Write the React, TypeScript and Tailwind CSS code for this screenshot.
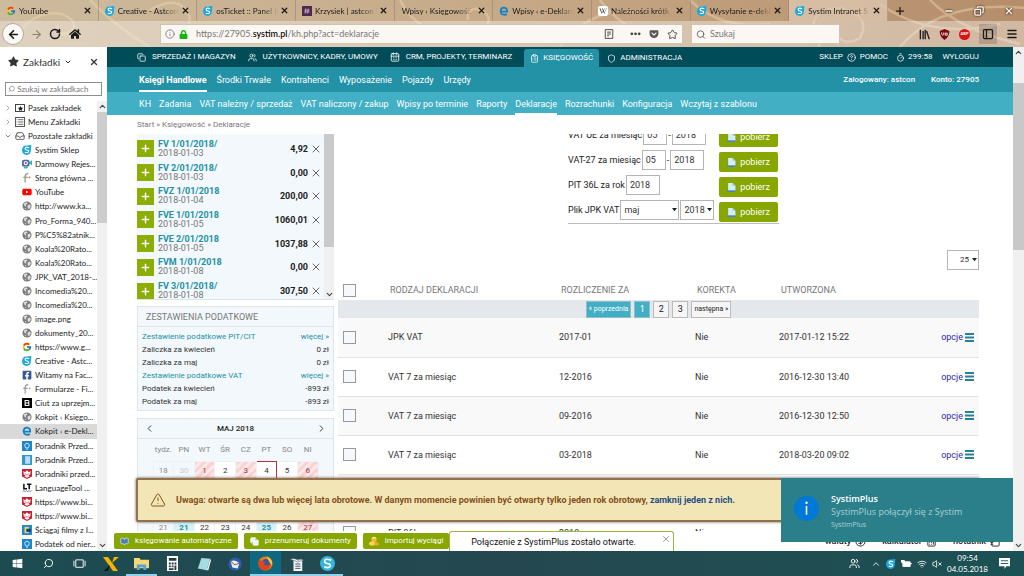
import { ReactNode } from 'react';
import {
	ArrowLeft, ArrowRight, BookOpen, Calculator, CalendarDays, ChevronDown, ChevronLeft, ChevronRight, ChevronUp,
	CircleHelp, ClipboardList, Copy, Info, Inbox, List, Menu, Minus, NotebookPen, PanelLeft, Plus, RotateCw, Search,
	Shield, Star, Timer, TriangleAlert, Users, VolumeX, Wifi, X, CircleDollarSign,
} from 'lucide-react';
import { FaFacebookSquare, FaGetPocket, FaHome, FaLock, FaStar, FaWikipediaW, FaWindows, FaYoutube } from 'react-icons/fa';
import { FcGoogle } from 'react-icons/fc';
import { clsx } from 'clsx';

type IconName =
	| 'google' | 'systim' | 'slack' | 'edge' | 'wiki' | 'globe' | 'youtube' | 'facebook' | 'fi' | 'fiColor' | 'camera'
	| 'black' | 'bulb' | 'book' | 'eagle' | 'lt' | 'film' | 'none';

const TABS: { title: string; icon: IconName }[] = [
	{ title: 'YouTube', icon: 'google' },
	{ title: 'Creative - Astcon', icon: 'systim' },
	{ title: 'osTicket :: Panel K', icon: 'systim' },
	{ title: 'Krzysiek | astcon S', icon: 'slack' },
	{ title: 'Wpisy ‹ Księgowość s', icon: 'none' },
	{ title: 'Wpisy ‹ e-Deklara', icon: 'edge' },
	{ title: 'Należności krótk', icon: 'wiki' },
	{ title: 'Wysyłanie e-dekl', icon: 'systim' },
	{ title: 'Systim Intranet Sy', icon: 'systim' },
];

const BOOKMARKS: { title: string; icon: IconName; active?: boolean }[] = [
	{ title: 'Systim Sklep', icon: 'systim' },
	{ title: 'Darmowy Rejes...', icon: 'camera' },
	{ title: 'Strona główna ...', icon: 'fiColor' },
	{ title: 'YouTube', icon: 'youtube' },
	{ title: 'http://www.ka...', icon: 'globe' },
	{ title: 'Pro_Forma_940...', icon: 'globe' },
	{ title: 'P%C5%82atnik...', icon: 'globe' },
	{ title: 'Koala%20Rato...', icon: 'globe' },
	{ title: 'Koala%20Rato...', icon: 'globe' },
	{ title: 'JPK_VAT_2018-...', icon: 'globe' },
	{ title: 'Incomedia%20...', icon: 'globe' },
	{ title: 'Incomedia%20...', icon: 'globe' },
	{ title: 'image.png', icon: 'globe' },
	{ title: 'dokumenty_20...', icon: 'globe' },
	{ title: 'https://www.g...', icon: 'google' },
	{ title: 'Creative - Astc...', icon: 'systim' },
	{ title: 'Witamy na Fac...', icon: 'facebook' },
	{ title: 'Formularze - Fi...', icon: 'fi' },
	{ title: 'Ciut za uprzejm...', icon: 'black' },
	{ title: 'Kokpit ‹ Księgo...', icon: 'globe' },
	{ title: 'Kokpit ‹ e-Dekl...', icon: 'edge', active: true },
	{ title: 'Poradnik Przed...', icon: 'bulb' },
	{ title: 'Poradnik Przed...', icon: 'book' },
	{ title: 'Poradniki przed...', icon: 'eagle' },
	{ title: 'LanguageTool ...', icon: 'lt' },
	{ title: 'https://www.bi...', icon: 'eagle' },
	{ title: 'https://www.bi...', icon: 'eagle' },
	{ title: 'Ściągaj filmy z I...', icon: 'film' },
	{ title: 'Podatek od nier...', icon: 'bulb' },
];

const INVOICES = [
	{ no: 'FV 1/01/2018/', date: '2018-01-03', amount: '4,92' },
	{ no: 'FV 2/01/2018/', date: '2018-01-03', amount: '0,00' },
	{ no: 'FVZ 1/01/2018', date: '2018-01-04', amount: '200,00' },
	{ no: 'FVE 1/01/2018', date: '2018-01-05', amount: '1060,01' },
	{ no: 'FVE 2/01/2018', date: '2018-01-05', amount: '1037,88' },
	{ no: 'FVM 1/01/2018', date: '2018-01-08', amount: '0,00' },
	{ no: 'FV 3/01/2018/', date: '2018-01-08', amount: '307,50' },
];

const TAXES = [
	{ label: 'Zestawienie podatkowe PIT/CIT', value: 'więcej »', link: true },
	{ label: 'Zaliczka za kwiecień', value: '0 zł' },
	{ label: 'Zaliczka za maj', value: '0 zł' },
	{ label: 'Zestawienie podatkowe VAT', value: 'więcej »', link: true },
	{ label: 'Podatek za kwiecień', value: '-893 zł' },
	{ label: 'Podatek za maj', value: '-893 zł' },
];

const WEEK_DAYS = ['tydz.', 'PN', 'WT', 'ŚR', 'CZ', 'PT', 'SO', 'NI'];
const WEEKS = [
	[18, 30, 1, 2, 3, 4, 5, 6],
	[19, 7, 8, 9, 10, 11, 12, 13],
	[20, 14, 15, 16, 17, 18, 19, 20],
	[21, 21, 22, 23, 24, 25, 26, 27],
];

const ROWS = [
	{ kind: 'JPK VAT', period: '2017-01', fixed: 'Nie', created: '2017-01-12 15:22' },
	{ kind: 'VAT 7 za miesiąc', period: '12-2016', fixed: 'Nie', created: '2016-12-30 13:40' },
	{ kind: 'VAT 7 za miesiąc', period: '09-2016', fixed: 'Nie', created: '2016-12-30 12:50' },
	{ kind: 'VAT 7 za miesiąc', period: '03-2018', fixed: 'Nie', created: '2018-03-20 09:02' },
	{ kind: '', period: '', fixed: '', created: '' },
	{ kind: 'PIT 36L', period: '2018', fixed: 'Nie', created: '' },
];

const SUB_NAV = [
	'KH', 'Zadania', 'VAT należny / sprzedaż', 'VAT naliczony / zakup', 'Wpisy po terminie', 'Raporty', 'Deklaracje',
	'Rozrachunki', 'Konfiguracja', 'Wczytaj z szablonu',
];

function SiteIcon({ name }: { name: IconName }) {
	switch (name) {
		case 'google': return <FcGoogle className="size-[10px] shrink-0" />;
		case 'youtube': return <FaYoutube className="size-[10px] shrink-0 text-[#f00]" />;
		case 'facebook': return <FaFacebookSquare className="size-[10px] shrink-0 text-[#3b5998]" />;
		case 'wiki': return <span className="flex size-[10px] shrink-0 items-center justify-center rounded-[2px] bg-white"><FaWikipediaW className="size-2" /></span>;
		case 'none': return null;
	}
	return (
		<svg viewBox="0 0 16 16" className="size-[10px] shrink-0" aria-hidden="true">
			{name === 'systim' && (
				<>
					<path d="M4 1 15 0 14 10Q13 16 7 16 1 15 0 9Q0 3 4 1Z" fill="#1ba8e0" />
					<path d="M11.5 4.5Q5 2 5 5.500 5 7.500 8 8 11 8.500 10.500 10.800 9.500 13 4.500 11.500" fill="none" stroke="#fff" strokeWidth="1.8" />
				</>
			)}
			{name === 'slack' && (
				<>
					<rect width="16" height="16" rx="1" fill="#4a2a4d" />
					<path d="M6 4 5 12M10 4 9 12M4 6.500H12M4 9.500H12" stroke="#cfb7c9" strokeWidth="1.300" />
				</>
			)}
			{name === 'edge' && (
				<path d="M3 9H13Q13.500 3 8 2.500 3 2.500 2.500 8 3 14 8.500 14 11 14 12.500 13" fill="none" stroke="#1583c6" strokeWidth="3" />
			)}
			{name === 'globe' && (
				<>
					<circle cx="8" cy="8" r="7.300" fill="#7b7b7b" />
					<path d="M3 4 7 2 9 4 6 6 7 9 4 8ZM9 7 13 5 14 9 11 13 9 11ZM4 11 7 12 6 14Z" fill="#dedede" />
				</>
			)}
			{(name === 'fi' || name === 'fiColor') && (
				<>
					<path d="M10 1Q5 1 5 6V15M2 7H9" fill="none" stroke={name === 'fi' ? '#999' : '#8b9b7b'} strokeWidth="2" />
					<circle cx="12" cy="7" r="1.500" fill={name === 'fi' ? '#aaa' : '#e06a4a'} />
				</>
			)}
			{name === 'camera' && (
				<>
					<rect x="0" y="1" width="12" height="11" rx="3" fill="#4b6aa8" />
					<path d="m11 5 5-3V10l-5-3Z" fill="#35b7a5" />
					<path d="M2 12H10L8 15H4Z" fill="#35b7a5" />
					<circle cx="6" cy="6.500" r="3.500" fill="#fff" />
					<circle cx="6" cy="6.500" r="1.800" fill="#c2416a" />
				</>
			)}
			{name === 'black' && (
				<>
					<rect width="16" height="16" fill="#000" />
					<path d="M5 4H9Q11.500 4 11 6.500L10 8Q12 9 11 11.500L9 12H5ZM5 8H10" fill="none" stroke="#fff" strokeWidth="1.800" />
				</>
			)}
			{name === 'bulb' && (
				<>
					<rect width="16" height="16" fill="#1c86c8" />
					<path d="M6 11Q3 7 5 5 8 2 11 5 13 7 10 11ZM6.500 13H9.500" fill="none" stroke="#d8f1ff" strokeWidth="1.400" />
				</>
			)}
			{name === 'book' && (
				<>
					<rect width="16" height="16" fill="#2f97d4" />
					<rect x="5" y="2" width="8" height="12" fill="#b9e0f5" />
				</>
			)}
			{name === 'eagle' && (
				<>
					<path d="M0 0H16V12L8 16 0 12Z" fill="#c8202f" />
					<path d="M2 3 5 5 8 2 11 5 14 3 13 9 10 9 12 12 8 14 4 12 6 9 3 9Z" fill="#fff" />
					<path d="M5 7 8 10 11 7" fill="none" stroke="#c8202f" strokeWidth="1" />
				</>
			)}
			{name === 'lt' && (
				<>
					<path d="M3 1V9H8M8 2H15M11.500 2V10" fill="none" stroke="#111" strokeWidth="2.400" />
					<path d="m1 14 2-2 2 2 2-2 2 2 2-2 2 2 2-2" fill="none" stroke="#4660a8" strokeWidth="1.300" />
				</>
			)}
			{name === 'film' && (
				<>
					<rect width="16" height="16" fill="#1e8ad6" />
					<path d="M4 3h7v10H4z" fill="#f1d35a" />
					<path d="M7 6h7v5H7z" fill="#123f70" />
				</>
			)}
		</svg>
	);
}

function Swirls() {
	return (
		<svg className="pointer-events-none absolute inset-0 size-full" viewBox="0 0 1024 47" preserveAspectRatio="xMidYMid slice" aria-hidden="true">
			<g fill="none" stroke="#f0d6b0" strokeWidth="2.500" opacity="0.45">
				<path d="M10 47Q30 8 62 14 84 24 66 34 54 34 58 26M90 0Q120 30 150 47M150 10Q180 -8 190 18 186 38 168 32" />
				<path d="M400 0Q420 40 470 34 500 24 482 10 466 6 468 20M560 47Q590 6 640 12M600 0Q630 40 680 40" />
				<path d="M690 0Q720 30 770 24M820 47Q800 10 840 8 872 16 860 38 842 48 836 32M880 4Q930 40 1000 24M900 47Q940 0 1024 8M930 0Q960 30 1020 44" />
			</g>
		</svg>
	);
}

function BrowserChrome() {
	return (
		<header className="relative shrink-0 bg-gradient-to-r from-[#cdbb9e] via-[#c6a987] to-[#b58d6b] text-[#1c1a18]">
			<Swirls />
			<div className="relative flex h-[21px] items-stretch">
				<div className="grid min-w-0 flex-1 grid-cols-9" role="tablist">
					{TABS.map((tab, i) => (
						<div
							key={tab.title}
							role="tab"
							className={clsx(
								'flex min-w-0 items-center gap-0.5 border-r border-[#8f7d68]/50 px-1.5',
								i === TABS.length - 1 && 'bg-[#e3cdb6]/70',
							)}
						>
							<SiteIcon name={tab.icon} />
							<span className="flex-1 overflow-hidden pl-px whitespace-nowrap [mask-image:linear-gradient(to_right,black_75%,transparent)]">{tab.title}</span>
							<button type="button" aria-label="Zamknij kartę"><X className="size-[9px]" strokeWidth={3.5} /></button>
						</div>
					))}
				</div>
				<div className="flex w-[136px] shrink-0 items-center justify-between pr-2.5 pl-1.5">
					<button type="button" aria-label="Nowa karta"><Plus className="size-3" strokeWidth={2.5} /></button>
					<div className="flex gap-5 text-[#fff8ee] drop-shadow-[0_0_1px_#000]">
						<button type="button" aria-label="Minimalizuj"><Minus className="size-2.5" strokeWidth={4} /></button>
						<button type="button" aria-label="Przywróć"><Copy className="size-2.5 -scale-x-100" strokeWidth={3} /></button>
						<button type="button" aria-label="Zamknij"><X className="size-2.5" strokeWidth={3} /></button>
					</div>
				</div>
			</div>
			<div className="relative flex h-[26px] items-center bg-[#f3eee6]/45 pr-1.5 pl-0.5">
				<div className="flex w-[158px] shrink-0 items-center gap-1.5">
					<button type="button" aria-label="Wstecz" className="flex size-[22px] items-center justify-center rounded-full border border-[#b6aa98] bg-[#fbf9f6]"><ArrowLeft className="size-[13px]" strokeWidth={3} /></button>
					<button type="button" aria-label="Dalej" className="text-[#8a8378]"><ArrowRight className="size-[13px]" /></button>
					<button type="button" aria-label="Odśwież"><RotateCw className="size-[12px]" strokeWidth={3} /></button>
					<button type="button" aria-label="Strona startowa" className="pl-0.5"><FaHome className="size-[12px]" /></button>
				</div>
				<div className="flex h-5 min-w-0 flex-1 items-center gap-1 border border-[#cfc3b3] bg-[#fbf8f4] px-1 text-[#777]">
					<Info className="size-2.5" />
					<FaLock className="size-[9px] text-[#12b512]" />
					<div className="flex-1 pl-1 text-[9px]">https://27905.<b className="font-medium text-black">systim.pl</b>/kh.php?act=deklaracje</div>
					<svg viewBox="0 0 16 16" className="mr-3 size-[10px]" aria-label="Widok do czytania"><path d="M2 1H14V15H2ZM5 5H11M5 8H11M5 11H8" fill="none" stroke="#444" strokeWidth="1.500" /></svg>
					<svg viewBox="0 0 12 4" className="mr-1 w-[11px]" aria-label="Więcej"><circle cx="2" cy="2" r="1.500" fill="#444" /><circle cx="6" cy="2" r="1.500" fill="#444" /><circle cx="10" cy="2" r="1.500" fill="#444" /></svg>
					<FaGetPocket className="mr-1 size-[10px] text-[#555]" />
					<Star className="size-[11px] text-[#444]" />
				</div>
				<label className="ml-2 flex h-5 w-[149px] shrink-0 items-center gap-1 border border-[#cfc3b3] bg-[#fbf8f4] px-1">
					<Search className="size-[11px] text-[#555]" />
					<input aria-label="Szukaj" placeholder="Szukaj" className="w-full min-w-0 bg-transparent text-[9px] outline-none placeholder:text-[#777]" />
				</label>
				<div className="flex w-[178px] shrink-0 items-center justify-end gap-[9px]">
					<svg viewBox="0 0 16 16" className="size-[11px]" aria-label="Biblioteka"><path d="M2 1V15M6 3V15M9 1V15M11 3 15 15" stroke="#222" strokeWidth="2" /></svg>
					<svg viewBox="0 0 16 16" className="size-[11px]" aria-label="uBlock"><path d="M8 0 15 3Q15 12 8 16 1 12 1 3Z" fill="#7c0912" /><path d="M4 5V8Q5 10 7 8V5M9 6h3v3H9Z" fill="none" stroke="#fff" strokeWidth="1.200" /></svg>
					<span className="flex size-[11px] items-center justify-center rounded-full bg-[#d81414] text-[4px] font-bold text-white">ABP</span>
					<button type="button" aria-label="Panel boczny" className="flex h-5 w-[18px] items-center justify-center bg-black/15"><PanelLeft className="size-3" strokeWidth={2.5} /></button>
					<button type="button" aria-label="Menu"><Menu className="size-3" strokeWidth={3} /></button>
				</div>
			</div>
		</header>
	);
}

function Scrollbar({ children }: { children?: ReactNode }) {
	return (
		<div className="flex shrink-0 flex-col items-center bg-[#f0f0f0] text-[#444]" aria-hidden="true">
			<ChevronUp className="my-px size-[9px]" strokeWidth={3} />
			{children}
			<div className="flex-1" />
			<ChevronDown className="my-px size-[9px]" strokeWidth={3} />
		</div>
	);
}

function Bookmarks() {
	return (
		<aside className="flex w-[107px] shrink-0 flex-col bg-white text-[#1d1d1d]">
			<div className="flex h-[29px] items-center gap-1 pr-2 pl-2 text-[#333]">
				<FaStar className="size-[11px]" />
				<span className="text-[10px]">Zakładki</span>
				<ChevronDown className="size-2" strokeWidth={3} />
				<button type="button" aria-label="Zamknij panel" className="ml-auto"><X className="size-[10px]" strokeWidth={3} /></button>
			</div>
			<label className="mx-[5px] mt-1.5 mb-[5px] flex h-[14px] items-center gap-0.5 border border-[#8d8d8d] px-0.5">
				<Search className="size-2 -scale-x-100 text-[#777]" />
				<input aria-label="Szukaj w zakładkach" placeholder="Szukaj w zakładkach" className="w-full min-w-0 text-[8px] outline-none placeholder:text-[#777]" />
			</label>
			<div className="flex min-h-0 flex-1">
				<ul className="grid min-w-0 flex-1 auto-rows-fr">
					<li className="flex items-center gap-[3px] pl-1 whitespace-nowrap"><ChevronRight className="size-2 text-[#888]" /><span className="flex h-[8px] w-[10px] items-center justify-center border border-[#444]"><FaStar className="size-[5px]" /></span>Pasek zakładek</li>
					<li className="flex items-center gap-[3px] pl-1 whitespace-nowrap"><ChevronRight className="size-2 text-[#888]" /><span className="flex size-[10px] items-center justify-center border border-[#555]"><List className="size-2" /></span>Menu Zakładki</li>
					<li className="flex items-center gap-[3px] pl-1 whitespace-nowrap"><ChevronDown className="size-2 text-[#444]" /><Inbox className="size-[10px] text-[#444]" />Pozostałe zakładki</li>
					{BOOKMARKS.map((b, i) => (
						<li key={i} className={clsx('flex', b.active && 'bg-[#d9d9d9]')}>
							<a href="#" className="flex items-center gap-[3px] pl-[22px] whitespace-nowrap"><SiteIcon name={b.icon} />{b.title}</a>
						</li>
					))}
				</ul>
				<Scrollbar><div className="h-[111px] w-[10px] bg-[#cdcdcd]" /></Scrollbar>
			</div>
		</aside>
	);
}

function TopNav() {
	return (
		<nav className="shrink-0 text-white">
			<div className="flex h-5 items-center justify-between bg-[#004c59] pr-[34px] pl-[30px]">
				<div className="flex h-full items-center gap-3">
					<a href="#" className="flex items-center gap-1.5"><Copy className="size-[9px]" />SPRZEDAŻ I MAGAZYN</a>
					<a href="#" className="flex items-center gap-1.5"><Users className="size-[9px]" />UŻYTKOWNICY, KADRY, UMOWY</a>
					<a href="#" className="flex items-center gap-1.5"><CalendarDays className="size-[10px]" />CRM, PROJEKTY, TERMINARZ</a>
					<div className="flex h-full items-end gap-2">
						<a href="#" className="flex h-[18px] items-center gap-1 rounded-t-[3px] bg-[#2391a6] px-1.5"><ClipboardList className="size-[9px]" />KSIĘGOWOŚĆ</a>
						<a href="#" className="flex h-[18px] items-center gap-1"><Shield className="size-[9px]" />ADMINISTRACJA</a>
					</div>
				</div>
				<div className="flex items-center">
					<a href="#">SKLEP</a>
					<a href="#" className="ml-1 flex items-center gap-1"><CircleHelp className="size-[9px]" />POMOC</a>
					<span className="ml-2 flex items-center gap-[3px]"><Timer className="size-[9px]" />299:58</span>
					<a href="#" className="ml-2.5">WYLOGUJ</a>
				</div>
			</div>
			<div className="flex h-[25px] items-stretch justify-between bg-[#2391a6] pr-[34px] pl-8">
				<div className="flex gap-2.5 text-[9px]">
					<a href="#" className="flex items-center border-y-2 border-t-transparent border-b-white font-bold">Księgi Handlowe</a>
					{['Środki Trwałe', 'Kontrahenci', 'Wyposażenie', 'Pojazdy', 'Urzędy'].map(label => (
						<a key={label} href="#" className="flex items-center">{label}</a>
					))}
				</div>
				<div className="flex items-center gap-4 font-medium">
					<span>Zalogowany: astcon</span>
					<span>Konto: 27905</span>
				</div>
			</div>
			<div className="flex h-[23px] items-stretch gap-2 bg-[#42afc5] pl-8 text-[9px]">
				{SUB_NAV.map(label => (
					<a key={label} href="#" className={clsx('flex items-center border-y-2 border-transparent', label === 'Deklaracje' && 'border-b-white')}>{label}</a>
				))}
			</div>
		</nav>
	);
}

function LeftColumn() {
	return (
		<div className="flex w-[197px] shrink-0 flex-col text-[8px]">
			<div className="flex h-[166px] shrink-0 overflow-hidden border-b border-[#dde3e6] bg-[#f2f8fb]">
				<ul className="mt-[3px] grid h-[166px] flex-1 auto-rows-fr">
					{INVOICES.map(inv => (
						<li key={inv.no} className="flex items-center">
							<button type="button" aria-label="Dodaj" className="flex size-[17px] items-center justify-center bg-[#8cad05] text-white"><Plus className="size-[11px]" strokeWidth={3} /></button>
							<div className="ml-1 flex-1 text-[9px] leading-[9px] text-[#777]">
								<a href="#" className="block font-bold text-[#2391a6]">{inv.no}</a>
								{inv.date}
							</div>
							<b className="text-[9px] text-[#222]">{inv.amount}</b>
							<button type="button" aria-label="Usuń" className="mx-0.5"><X className="size-3 text-[#555]" strokeWidth={1.8} /></button>
						</li>
					))}
				</ul>
				<div className="flex w-[10px] flex-col items-center justify-between bg-[#f0f0f0]" aria-hidden="true">
					<div className="h-[113px] w-full bg-[#cacaca]" />
					<ChevronDown className="size-[9px] text-[#444]" strokeWidth={3} />
				</div>
			</div>

			<section className="mt-1.5 shrink-0 border border-[#dfe6ea] bg-[#f2f8fb] pb-0.5">
				<h2 className="flex h-5 items-center border-b border-[#dfe6ea] pl-2 text-[9px] text-[#777]">ZESTAWIENIA PODATKOWE</h2>
				<div className="pt-[3px] pr-1 pl-1">
					{TAXES.map(tax => (
						<div key={tax.label} className={clsx('flex h-[13px] items-center justify-between', tax.link ? 'text-[#2391a6]' : 'text-[#333]')}>
							{tax.link ? <a href="#">{tax.label}</a> : <span>{tax.label}</span>}
							{tax.link ? <a href="#">{tax.value}</a> : <span>{tax.value}</span>}
						</div>
					))}
				</div>
			</section>

			<section className="mt-[7px] shrink-0 border border-[#dfe6ea] bg-[#f2f8fb]">
				<div className="flex h-5 items-center justify-between border-b border-[#dfe6ea] px-1.5">
					<button type="button" aria-label="Poprzedni miesiąc"><ChevronLeft className="size-[11px] text-[#333]" /></button>
					<h2 className="font-medium text-[#222]">MAJ 2018</h2>
					<button type="button" aria-label="Następny miesiąc"><ChevronRight className="size-[11px] text-[#333]" /></button>
				</div>
				<table className="mx-auto w-[166px] table-fixed text-center text-[#333]">
					<thead>
						<tr className="h-[22px] text-[#888]">
							{WEEK_DAYS.map(d => <th key={d} className="font-normal">{d}</th>)}
						</tr>
					</thead>
					<tbody>
						{WEEKS.map(week => (
							<tr key={week[0]} className="h-[19px]">
								{week.map((day, i) => {
									const holiday = i === 7 || (week[0] === 18 && (i === 2 || i === 4));
									const marked = week[0] === 21 && (i === 1 || i === 5);
									const today = week[0] === 18 && day === 4;
									return (
										<td
											key={i}
											className={clsx(
												'border',
												today ? 'border-[#b5333c]' : 'border-[#eef3f6]',
												day === 30 && 'text-[#ccc]',
												i === 0 && 'text-[#888]',
												i > 0 && day !== 30 && !holiday && !marked && 'bg-white',
												holiday && 'bg-[repeating-linear-gradient(135deg,#fbd0d0_0_3px,#fdeaea_3px_6px)] text-[#99404a]',
												marked && 'bg-[#d5f2f7] font-bold text-[#2391a6]',
											)}
										>
											{day}
										</td>
									);
								})}
							</tr>
						))}
					</tbody>
				</table>
			</section>
		</div>
	);
}

function Dropdown({ label, value, className }: { label: string; value: string; className: string }) {
	return (
		<span className={clsx('relative flex', className)}>
			<select aria-label={label} className="h-5 w-full appearance-none border border-[#b5b5b5] bg-white pl-[3px] text-[9px] text-[#333]">
				<option>{value}</option>
			</select>
			<svg viewBox="0 0 6 4" className="pointer-events-none absolute top-2 right-0.5 w-[5px]" aria-hidden="true"><path d="M0 0H6L3 4Z" fill="#222" /></svg>
		</span>
	);
}

function Field({ label, value, className }: { label: string; value: string; className: string }) {
	return <input aria-label={label} defaultValue={value} className={clsx('h-5 border border-[#b5b5b5] bg-white pl-[3px] text-[9px] text-[#333]', className)} />;
}

function FormRow({ label, children }: { label: string; children: ReactNode }) {
	return (
		<div className="flex h-[25px] shrink-0 justify-between">
			<div className="flex items-center gap-px text-[9px] text-[#222]"><span>{label}</span>{children}</div>
			<button type="button" className="mr-px flex h-5 w-[59px] items-center justify-center gap-1 self-end rounded-[2px] bg-[#87a600] text-[9px] text-white">
				<svg viewBox="0 0 16 16" className="size-[9px]" aria-hidden="true"><path d="M2 0H10L15 5V14H2Z" fill="#d5edfa" /><path d="M10 0V5H15Z" fill="#8ec4e8" /><path d="M0 13H15V16H0Z" fill="#4b86bb" /></svg>
				pobierz
			</button>
		</div>
	);
}

const CHECKBOX = 'block size-[13px] appearance-none border border-[#999] bg-[#f6f9fb]';

function MainColumn() {
	return (
		<div className="ml-1 flex min-w-0 flex-1 flex-col">
			<div className="ml-[230px] flex h-[90px] w-[211px] shrink-0 flex-col justify-end overflow-hidden border-b border-[#bbb] pb-px">
				<FormRow label="VAT UE za miesiąc">
					<Field label="Miesiąc VAT UE" value="05" className="w-6" />-<Field label="Rok VAT UE" value="2018" className="w-[34px]" />
				</FormRow>
				<FormRow label="VAT-27 za miesiąc">
					<Field label="Miesiąc VAT-27" value="05" className="w-6" />-<Field label="Rok VAT-27" value="2018" className="w-[34px]" />
				</FormRow>
				<FormRow label="PIT 36L za rok">
					<Field label="Rok PIT 36L" value="2018" className="w-[34px]" />
				</FormRow>
				<FormRow label="Plik JPK VAT">
					<Dropdown label="Miesiąc JPK" value="maj" className="w-[59px]" />
					<Dropdown label="Rok JPK" value="2018" className="w-[34px]" />
				</FormRow>
			</div>

			<div className="mt-[26px] flex shrink-0 justify-end">
				<span className="relative flex w-8">
					<select aria-label="Wierszy na stronie" className="h-5 w-full appearance-none border border-[#b5b5b5] bg-white pl-3 text-[8px] text-[#333]">
						<option>25</option>
					</select>
					<svg viewBox="0 0 6 4" className="pointer-events-none absolute top-2 right-0.5 w-[5px]" aria-hidden="true"><path d="M0 0H6L3 4Z" fill="#222" /></svg>
				</span>
			</div>

			<table className="mt-2.5 w-full table-fixed text-left text-[9px] text-[#333]">
				<colgroup>
					<col className="w-[50px]" />
					<col className="w-[171px]" />
					<col className="w-[136px]" />
					<col className="w-[84px]" />
					<col />
					<col className="w-[60px]" />
				</colgroup>
				<thead>
					<tr className="h-5 text-[#777]">
						<th className="pl-[5px]"><input type="checkbox" aria-label="Zaznacz wszystkie" className={CHECKBOX} /></th>
						<th className="pl-0.5 font-normal">RODZAJ DEKLARACJI</th>
						<th className="pl-0.5 font-normal">ROZLICZENIE ZA</th>
						<th className="pl-0.5 font-normal">KOREKTA</th>
						<th className="pl-0.5 font-normal">UTWORZONA</th>
						<th />
					</tr>
				</thead>
				<tbody>
					<tr className="h-[18px] bg-[#e4e7ec]">
						<td colSpan={6}>
							<div className="flex justify-center gap-[3px] text-[7px] text-[#222]">
								<button type="button" className="h-[17px] border border-[#8fbfca] bg-[#42afc5] px-0.5 text-white">« poprzednia</button>
								<button type="button" className="h-[17px] w-4 border border-[#8fbfca] bg-[#42afc5] text-[9px] text-white">1</button>
								<button type="button" className="h-[17px] w-4 border border-[#bbb] bg-[#f6f6f6] text-[9px]">2</button>
								<button type="button" className="h-[17px] w-4 border border-[#bbb] bg-[#f6f6f6] text-[9px]">3</button>
								<button type="button" className="h-[17px] border border-[#bbb] bg-[#f6f6f6] px-0.5">następna »</button>
							</div>
						</td>
					</tr>
					{ROWS.map((row, i) => (
						<tr key={i} className="h-[39px] border-b border-[#e3e3e3] odd:bg-white even:bg-[#f9f9f9]">
							<td className="pl-[5px]"><input type="checkbox" aria-label={row.kind} className={CHECKBOX} /></td>
							<td>{row.kind}</td>
							<td>{row.period}</td>
							<td>{row.fixed}</td>
							<td>{row.created}</td>
							<td className="pr-[5px]">
								{row.created && (
									<a href="#" className="flex items-center justify-end gap-0.5 text-[#2b1fb0]">
										opcje
										<svg viewBox="0 0 9 9" className="size-[9px]" aria-hidden="true"><path d="M0 1H9M0 4.500H9M0 8H9" stroke="#2a8197" strokeWidth="2" /></svg>
									</a>
								)}
							</td>
						</tr>
					))}
				</tbody>
			</table>
		</div>
	);
}

function GreenButton({ label, children }: { label: string; children: ReactNode }) {
	return (
		<button type="button" className="flex h-4 shrink-0 items-center gap-1.5 rounded-[2px] bg-[#87a600] px-1.5 text-white">
			{children}
			{label}
		</button>
	);
}

function BottomBar() {
	return (
		<div className="relative flex h-5 shrink-0 items-center justify-between bg-white pr-3 pl-[7px]">
			<div className="flex gap-1.5">
				<GreenButton label="księgowanie automatyczne"><BookOpen className="size-[9px] fill-[#4f7fae] text-[#cfe2f2]" /></GreenButton>
				<GreenButton label="przenumeruj dokumenty"><Copy className="size-[9px] fill-[#e8f3fb]" /></GreenButton>
				<GreenButton label="importuj wyciągi">
					<svg viewBox="0 0 12 12" className="size-[10px]" aria-hidden="true"><ellipse cx="6" cy="3" rx="3" ry="2" fill="#ffe98a" /><path d="M3 3V7H9V3" fill="#f0b93a" /><ellipse cx="4" cy="9" rx="4" ry="2.500" fill="#ffd65a" /><ellipse cx="9" cy="9.500" rx="3" ry="2" fill="#f5a623" /></svg>
				</GreenButton>
			</div>
			<div className="absolute top-0 left-[342px] flex h-5 w-[225px] items-center justify-center rounded-t-[3px] border border-b-0 border-[#9ab53a] bg-white pr-4 text-[9px] text-[#111]">
				Połączenie z SystimPlus zostało otwarte.
				<button type="button" aria-label="Zamknij" className="absolute top-0.5 right-0.5"><X className="size-[10px] text-[#666]" strokeWidth={1.5} /></button>
			</div>
			<div className="flex gap-4 text-[9px] font-medium text-[#222]">
				<span className="flex items-center gap-1">waluty <CircleDollarSign className="size-[11px]" /></span>
				<span className="flex items-center gap-1">kalkulator <Calculator className="size-[11px]" /></span>
				<span className="flex items-center gap-1">notatnik <NotebookPen className="size-[11px]" /></span>
			</div>
		</div>
	);
}

function Page() {
	return (
		<main className="relative flex min-w-0 flex-1 flex-col bg-white font-[Roboto,sans-serif]">
			<TopNav />
			<div className="flex h-[19px] shrink-0 items-center pl-[30px] text-[#777]">Start » Księgowość » Deklaracje</div>
			<div className="flex min-h-0 flex-1 overflow-hidden pr-[34px] pl-[30px]">
				<LeftColumn />
				<MainColumn />
			</div>
			<BottomBar />

			<div role="alert" className="absolute right-[33px] bottom-[29px] left-[29px] flex h-11 items-center gap-2.5 rounded-[2px] border-2 border-[#967049] bg-[#f2e6b6] pl-3 text-[9px] font-bold text-[#86501a] shadow-[0_0_3px_#555]">
				<TriangleAlert className="size-4" strokeWidth={1.5} />
				<span className="whitespace-nowrap">Uwaga: otwarte są dwa lub więcej lata obrotowe. W danym momencie powinien być otwarty tylko jeden rok obrotowy, <a href="#" className="text-[#1f4f86]">zamknij jeden z nich.</a></span>
			</div>

			<div role="status" className="absolute right-0 bottom-[9px] flex h-16 w-[232px] gap-3 bg-[#2b7f8b] pt-[14px] pl-[13px] font-['Open_Sans',sans-serif] text-white">
				<svg viewBox="0 0 24 24" className="mt-1 size-[25px]" aria-hidden="true"><circle cx="12" cy="12" r="12" fill="#0078d7" /><circle cx="12" cy="6.500" r="1.200" fill="#fff" /><path d="M12 9.500V18" stroke="#fff" strokeWidth="1.500" /></svg>
				<div className="text-[9px] leading-[13px]">
					<div className="font-semibold">SystimPlus</div>
					<div className="text-[#a9d0d6]">SystimPlus połączył się z Systim</div>
					<div className="text-[7px] text-[#a9d0d6]">SystimPlus</div>
				</div>
			</div>
		</main>
	);
}

function TaskItem({ open, active, children }: { open?: boolean; active?: boolean; children: ReactNode }) {
	return (
		<button type="button" className={clsx('flex h-full w-[31px] items-center justify-center border-y-2 border-t-transparent', open ? 'border-b-[#8fd0ea]' : 'border-b-transparent', active && 'bg-[#0e6880]')}>
			{children}
		</button>
	);
}

function Taskbar() {
	return (
		<footer className="flex h-[25px] shrink-0 items-center justify-between bg-gradient-to-r from-[#1c4c52] via-[#254850] to-[#1a5154] pr-[14px] pl-0.5 text-white">
			<div className="flex h-full">
				<TaskItem><FaWindows className="size-[11px]" /></TaskItem>
				<TaskItem><Search className="size-[11px] -scale-x-100" /></TaskItem>
				<TaskItem><svg viewBox="0 0 14 12" className="w-[13px]"><path d="M3 2H11V10H3ZM1 3V9M13 3V9" fill="none" stroke="#fff" /></svg></TaskItem>
				<TaskItem><svg viewBox="0 0 16 14" className="w-4"><path d="M0 0H5L15 14H10Z" fill="#f5b400" /><path d="M11 0H16L9 6Z" fill="#f5b400" /><path d="M1 14H5L7 8Z" fill="#111" /></svg></TaskItem>
				<TaskItem open><svg viewBox="0 0 16 14" className="w-[15px]"><path d="M0 1H6L7 3H16V12H0Z" fill="#f6d776" /><path d="M3 8H13V14H10V11H6V14H3Z" fill="#4ea6dc" /></svg></TaskItem>
				<TaskItem><svg viewBox="0 0 12 16" className="h-[15px]"><path d="M0 0H12V16H0Z" fill="#fff" /><path d="M2 2H10V5H2ZM2 7h2v2H2ZM5 7h2v2H5ZM8 7h2v2H8ZM2 10h2v2H2ZM5 10h2v2H5ZM8 10h2v5H8ZM2 13h5v2H2Z" fill="#263b40" /></svg></TaskItem>
				<TaskItem><svg viewBox="0 0 16 16" className="w-[14px]"><path d="M5 1 15 2 11 15 1 13Z" fill="#a6dbe6" /><path d="M11 15 15 2 16 4 13 15Z" fill="#eee" /></svg></TaskItem>
				<TaskItem><svg viewBox="0 0 16 16" className="w-[14px]"><circle cx="8" cy="8" r="7.500" fill="#2b5eaa" /><path d="M3 5Q8 2 13 7L11 13 5 12Z" fill="#e9eef5" /><path d="M3 5 8 9 13 7" fill="none" stroke="#8b3a2c" /></svg></TaskItem>
				<TaskItem open active><svg viewBox="0 0 16 16" className="w-[15px]"><circle cx="8" cy="8" r="7.500" fill="#ef7c12" /><circle cx="8.500" cy="7.500" r="4.200" fill="#3558a8" /><path d="M1 3Q4 7 8 6 5 8 8 10 11 11 14 8 13 15 7 15.500 0 14 .5 8Z" fill="#e2451b" /><path d="M9 0Q16 3 15 10L12 6Z" fill="#ffc52e" /></svg></TaskItem>
				<TaskItem open><svg viewBox="0 0 16 16" className="w-[14px]"><path d="M4 3H14V16H4Z" fill="#f4f7f9" /><path d="M0 3Q5 0 9 4 12 1 16 4 11 4 9 6 5 3 0 3Z" fill="#fff" stroke="#345" strokeWidth=".6" /><path d="M6 8H12M6 10.500H12M6 13H12" stroke="#345" /></svg></TaskItem>
				<TaskItem open><svg viewBox="0 0 16 16" className="w-[15px]"><circle cx="8" cy="8" r="8" fill="#35b5de" /><path d="M12 4.500Q5 2 5 5.500 5 7.500 8 8 11.500 8.500 11 10.800 9.500 13.500 4.500 11.500" fill="none" stroke="#fff" strokeWidth="1.800" /></svg></TaskItem>
			</div>
			<div className="flex items-center gap-[5px]">
				<Users className="mr-1.5 size-[11px]" />
				<ChevronUp className="size-[10px]" />
				<SiteIcon name="systim" />
				<svg viewBox="0 0 12 8" className="w-[11px]"><path d="M2 2H10V7H2ZM10 4H12" fill="#fff" stroke="#fff" /><path d="M0 0H4V3H0Z" fill="#fff" /></svg>
				<Wifi className="size-[10px]" />
				<VolumeX className="size-[10px]" />
				<div className="mr-1.5 text-center leading-[11px]">09:54<br />04.05.2018</div>
				<svg viewBox="0 0 12 12" className="w-[11px]"><path d="M0 0H12V9H8L6 12V9H0Z" fill="#fff" /><path d="M2 3H10M2 6H10" stroke="#1a5154" /></svg>
			</div>
		</footer>
	);
}

export default function App() {
	return (
		<div className="flex h-screen flex-col overflow-hidden font-[Lato,sans-serif] text-[8px] leading-[12px]">
			<BrowserChrome />
			<div className="flex min-h-0 flex-1">
				<Bookmarks />
				<Page />
				<Scrollbar><div className="mt-[25px] h-[167px] w-[11px] bg-[#c8c8c8]" /></Scrollbar>
			</div>
			<Taskbar />
		</div>
	);
}
